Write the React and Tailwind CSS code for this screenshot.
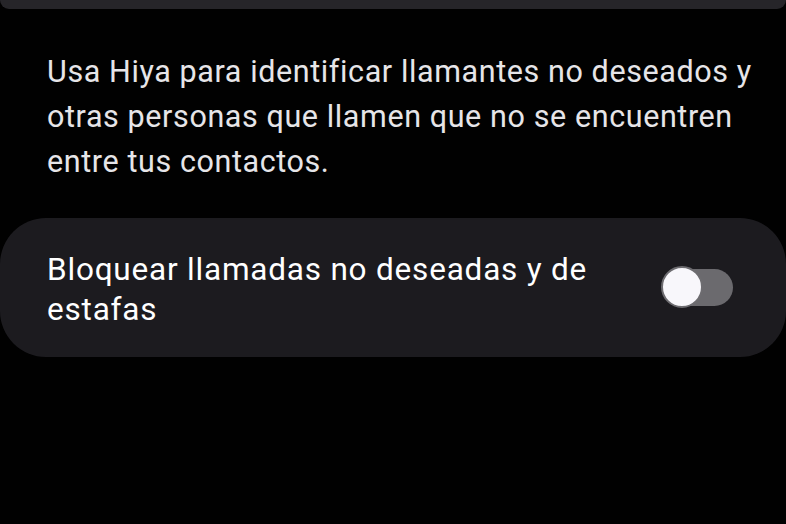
import React, { useState } from "react";

export default function App() {
  const [on, setOn] = useState(false);

  return (
    <div
      className="w-[786px] h-[524px] bg-[#010101] overflow-hidden"
      style={{ fontFamily: "Roboto, 'Noto Sans', sans-serif" }}
    >
      <div className="h-[9px] w-full rounded-b-[46px] bg-[#262529]" />

      <p className="mt-[40px] pl-[47px] pr-[20px] text-[30.5px] leading-[45px] tracking-[0.6px] text-[#e6e5e8]">
        Usa Hiya para identificar llamantes no deseados y otras personas que llamen que no se encuentren entre tus contactos.
      </p>

      <div className="mt-[34px] flex items-start rounded-[46px] bg-[#1c1b1f] pl-[47px] pr-[53px] pt-[32px] pb-[27px]">
        <div className="w-[570px] text-[31.5px] leading-[40px] tracking-[0.8px] text-white">
          Bloquear llamadas no deseadas y de estafas
        </div>
        <button
          onClick={() => setOn((v) => !v)}
          className="relative ml-auto mt-[16px] h-[42px] w-[72px] shrink-0"
          aria-label="Bloquear llamadas"
        >
          <span className="absolute left-[3px] top-[3px] h-[37px] w-[69px] rounded-full bg-[#6b6a6e]" />
          <span className="absolute left-0 top-0 h-[42px] w-[42px] rounded-full border-2 border-[#6d6c70] bg-[#f8f7fb]" />
        </button>
      </div>
    </div>
  );
}
